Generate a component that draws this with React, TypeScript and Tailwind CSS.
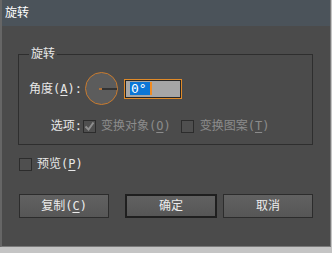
import React from "react";

const font = { fontFamily: '"DejaVu Sans Mono", "Noto Sans CJK SC", monospace' };

function Box({ checked, disabled }: { checked?: boolean; disabled?: boolean }) {
  return (
    <span className="w-[13px] h-[13px] border border-[#2c2c2c] bg-[#4f4f4f] flex items-center justify-center shrink-0">
      {checked && (
        <svg width="11" height="11" viewBox="0 0 11 11">
          <path d="M1.5 5.5 L4.5 8.5 L9.5 1.5" fill="none" stroke={disabled ? "#8e8e8e" : "#e0e0e0"} strokeWidth="2" />
        </svg>
      )}
    </span>
  );
}

function Btn({ label, hot, primary }: { label: string; hot?: string; primary?: boolean }) {
  return (
    <button
      className={
        "h-[24px] flex items-center justify-center text-[12px] text-[#ececec] bg-gradient-to-b from-[#616161] to-[#565656] " +
        (primary ? "w-[92px] border-2 border-[#1f1f1f]" : "w-[90px] border border-[#2c2c2c]")
      }
    >
      {label}
      {hot && (
        <>
          (<span className="underline underline-offset-2">{hot}</span>)
        </>
      )}
    </button>
  );
}

export default function App() {
  return (
    <div className="w-[332px] h-[253px] bg-[#c4c4c4] overflow-hidden" style={font}>
      <div className="w-[331px] h-[247px] flex flex-col bg-[#4b4b4b] border-l-2 border-l-[#666] border-r border-r-[#7a7a7a] border-b border-b-[#7a7a7a]">
        <div className="h-[26px] shrink-0 bg-[#4b535a] flex items-center pl-[3px] text-[12px] text-white leading-none">
          旋转
        </div>

        <div className="relative ml-[16px] mt-[28px] w-[295px] h-[91px] border border-[#2e2e2e] pt-[17px]">
          <span className="absolute left-[10px] top-[-9px] bg-[#4b4b4b] px-[2px] text-[12px] leading-[16px] text-[#e8e8e8]">
            旋转
          </span>
          <div className="grid grid-cols-[63px_1fr] items-center gap-y-[12px]">
            <span className="text-right text-[12px] text-[#e8e8e8]">
              角度(<span className="underline underline-offset-2">A</span>):
            </span>
            <div className="flex items-center">
              <div className="ml-[3px] w-[33px] h-[33px] rounded-full border border-[#c97b2e] bg-[#5c5c5c] relative">
                <span className="absolute left-[15px] top-[15px] w-[16px] h-[2px] bg-[#333]" />
                <span className="absolute left-[13px] top-[15px] w-[3px] h-[2px] bg-[#b0733a]" />
              </div>
              <div className="ml-[6px] w-[58px] h-[20px] border border-[#e08a28] p-0">
                <div className="w-full h-full border border-[#262626] bg-[#a6a6a6] flex items-center pl-[4px]">
                  <span className="h-[13px] w-[20px] bg-[#0b76d6] text-white text-[13px] leading-[13px] pl-[1px]">
                    0°
                  </span>
                  <span className="h-[13px] w-[2px] bg-[#f08a20]" />
                </div>
              </div>
            </div>
            <span className="text-right text-[12px] text-[#e8e8e8]">选项:</span>
            <div className="flex items-center text-[12px] text-[#8c8c8c] ml-[1px]">
              <Box checked disabled />
              <span className="ml-[5px]">
                变换对象(<span className="underline underline-offset-2">O</span>)
              </span>
              <span className="ml-[10px]">
                <Box disabled />
              </span>
              <span className="ml-[6px]">
                变换图案(<span className="underline underline-offset-2">T</span>)
              </span>
            </div>
          </div>
        </div>

        <div className="ml-[17px] mt-[10px] flex items-center text-[12px] text-[#e8e8e8]">
          <Box />
          <span className="ml-[5px]">
            预览(<span className="underline underline-offset-2">P</span>)
          </span>
        </div>

        <div className="ml-[17px] mt-[21px] flex items-center">
          <Btn label="复制" hot="C" />
          <span className="ml-[16px]">
            <Btn label="确定" primary />
          </span>
          <span className="ml-[6px]">
            <Btn label="取消" />
          </span>
        </div>
      </div>
    </div>
  );
}
